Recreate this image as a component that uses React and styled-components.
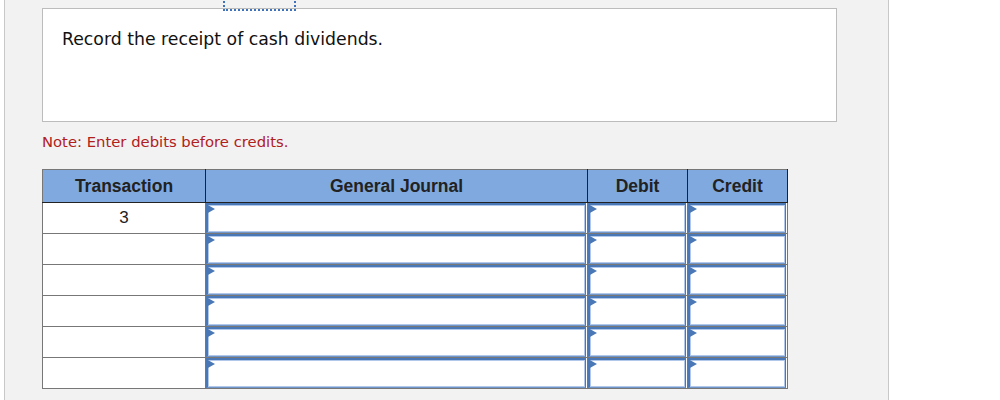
import React from 'react'
import styled, { createGlobalStyle } from 'styled-components'

const GlobalStyle = createGlobalStyle`
  html, body {
    margin: 0;
    padding: 0;
    background: #fff;
  }
`

const Panel = styled.div`
  position: relative;
  box-sizing: border-box;
  margin-left: 4px;
  width: 885px;
  min-height: 400px;
  padding: 8px 0 0 37px;
  background: #f2f2f2;
  border-left: 1px solid #c8c8c8;
  border-right: 1px solid #c8c8c8;
  overflow: hidden;
`

const FocusRing = styled.div`
  position: absolute;
  left: 218px;
  top: -20px;
  width: 69px;
  height: 29px;
  border: 1px dotted #3f72bd;
  border-width: 0 2px 2px 2px;
  border-style: dotted;
`

const Prompt = styled.div`
  box-sizing: border-box;
  width: 795px;
  height: 114px;
  padding: 20px 19px;
  background: #fff;
  border: 1px solid #bcbcbc;
  font-family: 'DejaVu Sans', Verdana, sans-serif;
  font-size: 17.3px;
  color: #111;
`

const Note = styled.p`
  margin: 11px 0 0;
  font-family: 'DejaVu Sans', Verdana, sans-serif;
  font-size: 14.8px;
  color: #b0201c;
`

const Journal = styled.table`
  margin-top: 19px;
  border-collapse: collapse;
  border: 1px solid #777;
  table-layout: fixed;
  font-family: 'Liberation Sans', Arial, sans-serif;
  font-size: 17px;
  color: #222;
`

const Head = styled.th`
  width: ${p => p.$w}px;
  height: 32px;
  padding: 0;
  background: #80aadf;
  border-right: 1px solid #222;
  border-bottom: 1px solid #222;
  font-size: 17.5px;
  font-weight: bold;
  text-align: center;
`

const Cell = styled.td`
  height: 30px;
  padding: 0;
  background: #fff;
  border: 1px solid #777;
  text-align: center;
  vertical-align: middle;
`

const EntryCell = styled(Cell)`
  padding: 0 1px 0 0;
`

const Entry = styled.div`
  position: relative;
  box-sizing: border-box;
  height: 30px;
  background: #fff;
  border: 1px solid #4a77b5;
  border-left-width: 2px;
  border-top-width: 2px;
  border-bottom-color: #6f95c9;
  box-shadow: inset 0 0 0 1px #b2c8ea;
`

const Flag = styled.svg`
  position: absolute;
  z-index: 1;
  left: -2px;
  top: -1px;
  display: block;
`

const rows = ['3', '', '', '', '', '']

const Input = () => (
  <Entry>
    <Flag width="9" height="10" viewBox="0 0 9 10">
      <path d="M0 0 L9 5 L0 10 Z" fill="#4a77b5" />
    </Flag>
  </Entry>
)

export default function App() {
  return (
    <>
      <GlobalStyle />
      <Panel>
        <FocusRing />
        <Prompt>Record the receipt of cash dividends.</Prompt>
        <Note>Note: Enter debits before credits.</Note>
        <Journal>
          <thead>
            <tr>
              <Head $w={162}>Transaction</Head>
              <Head $w={381}>General Journal</Head>
              <Head $w={99}>Debit</Head>
              <Head $w={99}>Credit</Head>
            </tr>
          </thead>
          <tbody>
            {rows.map((t, i) => (
              <tr key={i}>
                <Cell>{t}</Cell>
                <EntryCell><Input /></EntryCell>
                <EntryCell><Input /></EntryCell>
                <EntryCell><Input /></EntryCell>
              </tr>
            ))}
          </tbody>
        </Journal>
      </Panel>
    </>
  )
}
